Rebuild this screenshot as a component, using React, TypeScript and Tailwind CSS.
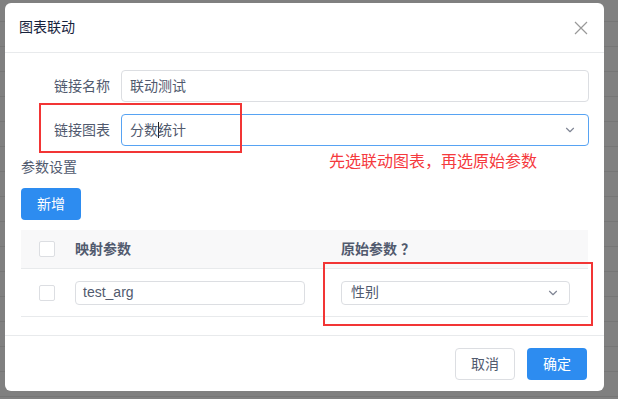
import React from 'react';
import { ChevronDown } from 'lucide-react';

const font = { fontFamily: '"Liberation Sans", "Noto Sans CJK SC", sans-serif' };

const Checkbox: React.FC = () => (
  <span className="block w-4 h-4 bg-white border border-[#dcdee2] rounded-[2px]" />
);

const CloseIcon: React.FC = () => (
  <svg width="14" height="14" viewBox="0 0 14 14" className="mr-[1px]">
    <path d="M1 1L13 13M13 1L1 13" stroke="#999" strokeWidth="1.2" fill="none" />
  </svg>
);

export default function App() {
  return (
    <div
      style={font}
      className="relative w-[618px] h-[399px] overflow-hidden bg-[#808080] bg-[linear-gradient(to_bottom,transparent_24px,#767676_24px)] bg-[length:100%_25px] bg-[position:0_-3px]"
    >
      {/* modal */}
      <div className="ml-[5px] mt-[3px] w-[599px] h-[388px] bg-white rounded-[6px] flex flex-col text-[14px] text-[#515a6e]">
        <div className="h-[50px] shrink-0 flex items-center justify-between px-[15px] border-b border-[#e8eaec]">
          <span className="text-[#17233d] text-[14px] ml-[-1px]">图表联动</span>
          <CloseIcon />
        </div>

        <div className="flex-1 pl-4 pr-[15px] pt-[17px]">
          <div className="flex items-center h-8 mb-[12px]">
            <label className="w-[100px] pr-[11px] text-right">链接名称</label>
            <div className="flex-1 h-8 border border-[#dcdee2] rounded-[4px] flex items-center px-[8px]">
              联动测试
            </div>
          </div>
          <div className="flex items-center h-8">
            <label className="w-[100px] pr-[11px] text-right">链接图表</label>
            <div className="flex-1 h-8 border border-[#57a3f3] rounded-[4px] flex items-center justify-between pl-[8px] pr-[11px]">
              <span className="flex items-center">
                分数<span className="inline-block w-px h-[16px] bg-[#222] -mx-[0.5px]" />统计
              </span>
              <ChevronDown className="w-[14px] h-[14px] text-[#808695]" />
            </div>
          </div>

          <div className="mt-[11px] h-5 leading-5">参数设置</div>

          <button className="mt-[11px] w-[60px] h-8 rounded-[4px] bg-[#2d8cf0] text-white text-[14px]">
            新增
          </button>

          <div className="mt-[10px] w-[567px]">
            <div className="grid grid-cols-[36px_266px_1fr] h-[39px] items-center bg-[#f8f8f9] border-b border-[#e8eaec] font-bold">
              <div className="pl-[18px]"><Checkbox /></div>
              <div className="pl-[18px]">映射参数</div>
              <div className="pl-[18px]">原始参数<span className="ml-[4px]">？</span></div>
            </div>
            <div className="grid grid-cols-[36px_266px_1fr] h-[48px] items-center border-b border-[#e8eaec]">
              <div className="pl-[18px]"><Checkbox /></div>
              <div className="px-[18px]">
                <div className="h-6 border border-[#dcdee2] rounded-[4px] flex items-center px-[7px]">
                  test_arg
                </div>
              </div>
              <div className="px-[18px]">
                <div className="h-6 border border-[#dcdee2] rounded-[4px] flex items-center justify-between pl-[9px] pr-[9px]">
                  <span>性别</span>
                  <ChevronDown className="w-[14px] h-[14px] text-[#808695]" />
                </div>
              </div>
            </div>
          </div>
        </div>

        <div className="h-[56px] shrink-0 border-t border-[#e8eaec] flex justify-end items-start gap-[12px] pt-[12px] pr-[17px]">
          <button className="w-[60px] h-8 rounded-[4px] border border-[#dcdee2] bg-white text-[#515a6e] text-[14px]">
            取消
          </button>
          <button className="w-[60px] h-8 rounded-[4px] bg-[#2d8cf0] text-white text-[14px]">
            确定
          </button>
        </div>
      </div>

      {/* red annotations */}
      <div className="absolute left-[39px] top-[103px] w-[203px] h-[50px] border-2 border-[#f23535]" />
      <div className="absolute left-[323px] top-[262px] w-[270px] h-[64px] border-2 border-[#f23535]" />
      <div className="absolute left-[329px] top-[152px] text-[16px] leading-5 text-[#f5393d]">
        先选联动图表，再选原始参数
      </div>
    </div>
  );
}
